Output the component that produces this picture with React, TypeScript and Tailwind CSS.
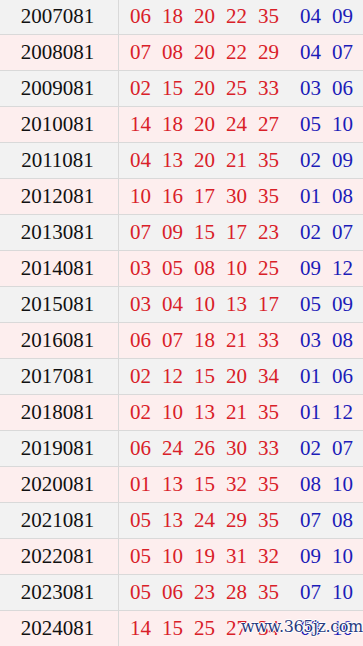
import React from "react";

const rows: [string, string[], string[]][] = [
  ["2007081", ["06", "18", "20", "22", "35"], ["04", "09"]],
  ["2008081", ["07", "08", "20", "22", "29"], ["04", "07"]],
  ["2009081", ["02", "15", "20", "25", "33"], ["03", "06"]],
  ["2010081", ["14", "18", "20", "24", "27"], ["05", "10"]],
  ["2011081", ["04", "13", "20", "21", "35"], ["02", "09"]],
  ["2012081", ["10", "16", "17", "30", "35"], ["01", "08"]],
  ["2013081", ["07", "09", "15", "17", "23"], ["02", "07"]],
  ["2014081", ["03", "05", "08", "10", "25"], ["09", "12"]],
  ["2015081", ["03", "04", "10", "13", "17"], ["05", "09"]],
  ["2016081", ["06", "07", "18", "21", "33"], ["03", "08"]],
  ["2017081", ["02", "12", "15", "20", "34"], ["01", "06"]],
  ["2018081", ["02", "10", "13", "21", "35"], ["01", "12"]],
  ["2019081", ["06", "24", "26", "30", "33"], ["02", "07"]],
  ["2020081", ["01", "13", "15", "32", "35"], ["08", "10"]],
  ["2021081", ["05", "13", "24", "29", "35"], ["07", "08"]],
  ["2022081", ["05", "10", "19", "31", "32"], ["09", "10"]],
  ["2023081", ["05", "06", "23", "28", "35"], ["07", "10"]],
  ["2024081", ["14", "15", "25", "27", "34"], ["03", "10"]],
];

export default function App() {
  return (
    <div
      className="relative w-[363px] h-[646px] overflow-hidden bg-white"
      style={{ fontFamily: '"Liberation Serif", "DejaVu Serif", serif' }}
    >
      <div className="-mt-px flex flex-col">
        {rows.map(([year, reds, blues], i) => (
          <div
            key={year}
            className={`flex h-[36px] border-b border-[#d9d9d9] text-[21px] leading-none ${
              i % 2 === 0 ? "bg-[#f2f2f2]" : "bg-[#fdeeee]"
            }`}
          >
            <div className="w-[119px] shrink-0 border-r border-[#d9d9d9] flex items-center justify-center pr-[3px] text-[#111111]">
              {year}
            </div>
            <div className="flex items-center pl-[11px] gap-[11px] text-[#d92028]">
              {reds.map((n, k) => (
                <span key={k}>{n}</span>
              ))}
              <span className="ml-[10px] text-[#1c1cb8]">{blues[0]}</span>
              <span className="text-[#1c1cb8]">{blues[1]}</span>
            </div>
          </div>
        ))}
      </div>
      <div
        className="absolute left-[241px] top-[619px] text-[16px] leading-none font-medium text-[#2a3a80] tracking-[-0.4px]"
        style={{
          fontFamily: '"DejaVu Serif", serif',
          textShadow:
            "1px 0 0 #fff, -1px 0 0 #fff, 0 1px 0 #fff, 0 -1px 0 #fff",
        }}
      >
        www.365jz.com
      </div>
    </div>
  );
}
